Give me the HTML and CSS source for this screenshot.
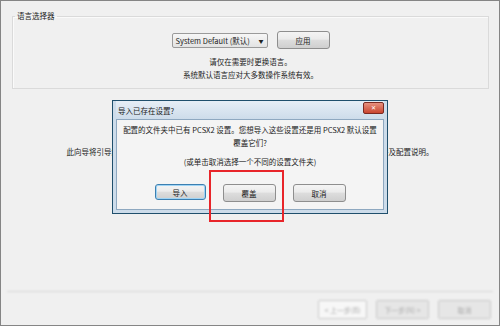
FILE: index.html
```html
<!DOCTYPE html>
<html lang="zh-CN">

<head>
    <meta charset="UTF-8">
    <meta name="viewport" content="width=device-width, initial-scale=1.0">
    <title>PCSX2 首次运行向导</title>
    <link rel="stylesheet" href="styles.css">
</head>

<body>
    <div class="wizard">
        <div class="wizard-body">
            <!-- Language Selector -->
            <fieldset class="group">
                <legend>语言选择器</legend>
                <div class="lang-row">
                    <div class="select">System Default (默认)<span class="arrow">▼</span></div>
                    <button class="btn">应用</button>
                </div>
                <p class="note">请仅在需要时更换语言。<br>系统默认语言应对大多数操作系统有效。</p>
            </fieldset>

            <p class="intro">此向导将引导您完成插件、记忆卡和 BIOS 配置。如果这是第一次安装 PCSX2，建议查看自述文件及配置说明。</p>
        </div>

        <!-- Wizard Footer -->
        <div class="wizard-footer">
            <button class="nav-button first">&lt; 上一步(B)</button>
            <button class="nav-button">下一步(N) &gt;</button>
            <button class="nav-button">取消</button>
        </div>

        <!-- Message Box -->
        <div class="dialog">
            <div class="dialog-title">
                <span>导入已存在设置?</span>
                <span class="close-button">✕</span>
            </div>
            <div class="dialog-content">
                <p class="message">配置的文件夹中已有 PCSX2 设置。您想导入这些设置还是用 PCSX2 默认设置<br>覆盖它们?</p>
                <p class="message hint">(或单击取消选择一个不同的设置文件夹)</p>
                <div class="dialog-buttons">
                    <button class="btn default">导入</button>
                    <button class="btn">覆盖</button>
                    <button class="btn">取消</button>
                </div>
            </div>
        </div>

        <div class="highlight"></div>
    </div>
</body>

</html>
```

FILE: styles.css
```css
body {
    margin: 0;
    padding: 0;
    background-color: #f0f0f0;
    font-family: "Noto Sans CJK SC", "Noto Sans", sans-serif;
    font-size: 7.5px;
    color: #222;
}

.wizard {
    position: relative;
    width: 500px;
    height: 326px;
    box-sizing: border-box;
    border: 1px solid #858585;
    background-color: #f0f0f0;
    display: flex;
    flex-direction: column;
}

.wizard-body {
    flex: 1;
}

.group {
    margin: 10px 10px 0 11px;
    padding: 0;
    height: 78px;
    box-sizing: border-box;
    border: 1px solid #dadada;
    box-shadow: inset 1px 1px 0 #fafafa;
}

.group legend {
    margin-left: 2px;
    padding: 0 2px;
    line-height: 10px;
}

.lang-row {
    display: flex;
    justify-content: center;
    align-items: center;
    gap: 9px;
    margin-top: 10px;
}

.select {
    width: 96px;
    height: 15px;
    box-sizing: border-box;
    border: 1px solid #9a9a9a;
    border-radius: 2px;
    background: linear-gradient(#f6f6f6, #e3e3e3);
    display: flex;
    align-items: center;
    justify-content: space-between;
    padding: 0 3px;
    line-height: 13px;
}

.arrow {
    font-size: 5px;
}

.btn {
    width: 53px;
    height: 18px;
    box-sizing: border-box;
    border: 1px solid #8e8e8e;
    border-radius: 3px;
    background: linear-gradient(#f4f4f4 0%, #ebebeb 45%, #dddddd 50%, #cfcfcf 100%);
    font-family: inherit;
    font-size: 7.5px;
    color: #222;
    padding: 0;
}

.note {
    margin: 6px 0 0;
    text-align: center;
    line-height: 13px;
}

.intro {
    margin: 57px 0 0;
    text-align: center;
    white-space: nowrap;
}

.wizard-footer {
    margin: 0 6px 6px 6px;
    border-top: 1px solid #d6d6d6;
    padding: 8px 2px 0 0;
    display: flex;
    justify-content: flex-end;
    gap: 9px;
    filter: blur(1px);
}

.nav-button {
    width: 53px;
    height: 19px;
    border: 1px solid #c8c8c8;
    border-radius: 2px;
    background: #e6e6e6;
    font-family: inherit;
    font-size: 7px;
    color: #aaa;
    padding: 0;
}

.nav-button.first {
    width: 49px;
    background: #f7f7f7;
}

/* Message box */
.dialog {
    position: absolute;
    left: 111px;
    top: 99px;
    width: 276px;
    height: 114px;
    box-sizing: border-box;
    border: 1px solid #1f4f6c;
    background-color: #cddcea;
    padding: 0 3px 3px 3px;
    display: flex;
    flex-direction: column;
}

.dialog-title {
    height: 18px;
    display: flex;
    align-items: center;
    justify-content: space-between;
    padding-left: 2px;
    background: linear-gradient(#e6eef6, #cddcea);
}

.close-button {
    width: 19px;
    height: 10px;
    margin-top: -5px;
    border: 1px solid #7a2a22;
    border-radius: 2px;
    background: linear-gradient(#e7917f, #c9452f);
    color: #fff;
    font-size: 6px;
    line-height: 10px;
    text-align: center;
}

.dialog-content {
    flex: 1;
    border: 1px solid #8ea8c0;
    background-color: #f4f4f4;
}

.message {
    margin: 3px 0 0;
    text-align: center;
    line-height: 13px;
}

.message.hint {
    margin-top: 6px;
}

.dialog-buttons {
    display: flex;
    justify-content: center;
    gap: 17px;
    margin-top: 16px;
}

.btn.default {
    width: 51px;
    height: 16px;
    border-color: #3c7fb1;
    box-shadow: inset 0 0 0 1px #9fd4f5;
}

.highlight {
    position: absolute;
    left: 208px;
    top: 169px;
    width: 75px;
    height: 52px;
    box-sizing: border-box;
    border: 2px solid #e8252a;
}
```
